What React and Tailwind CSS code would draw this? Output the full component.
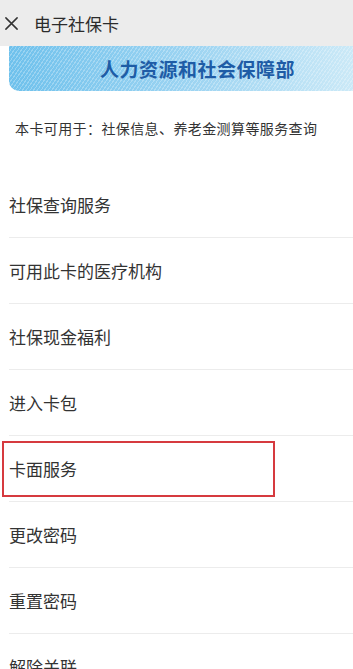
import React from 'react';

const items = ['社保查询服务', '可用此卡的医疗机构', '社保现金福利', '进入卡包', '卡面服务', '更改密码', '重置密码', '解除关联'];

export default function App() {
  return (
    <div
      className="w-[353px] h-[669px] overflow-hidden bg-white text-[#2b2b2b]"
      style={{ fontFamily: '"Noto Sans CJK SC", "Noto Sans", sans-serif' }}
    >
      {/* Top bar */}
      <div className="h-[46px] bg-[#ececec] flex items-center">
        <svg className="ml-[4px] w-[15px] h-[15px]" viewBox="0 0 16 16" fill="none" stroke="#333" strokeWidth="1.6" strokeLinecap="round">
          <path d="M2 2 L14 14 M14 2 L2 14" />
        </svg>
        <span className="ml-[15px] text-[17px] leading-none">电子社保卡</span>
      </div>

      {/* Card banner */}
      <div className="ml-[9px] h-[45px] rounded-bl-[10px] bg-[repeating-linear-gradient(125deg,rgba(255,255,255,0.28)_0px,rgba(255,255,255,0.28)_1px,transparent_1px,transparent_3px),linear-gradient(90deg,#6fc1ec,#9fd5f2_55%,#cbe9f7)] flex items-center">
        <span className="ml-[91px] text-[19px] font-bold text-[#1e5ca6] leading-none tracking-[0.5px]">人力资源和社会保障部</span>
      </div>

      {/* Description */}
      <div className="mt-[27px] pl-[15px] text-[14px] leading-[20px] text-[#333] tracking-[0.4px]">
        本卡可用于：社保信息、养老金测算等服务查询
      </div>

      {/* Menu */}
      <div className="mt-[34px]">
        {items.map((t, i) => (
          <div key={t} className="relative ml-[9px] h-[66px] border-b border-[#ececec] flex items-center">
            <span className="text-[17px] text-[#333]">{t}</span>
            {i === 4 && (
              <div className="absolute left-[-7px] top-[5px] w-[273px] h-[56px] border-2 border-[#d63a3f]" />
            )}
          </div>
        ))}
      </div>
    </div>
  );
}
